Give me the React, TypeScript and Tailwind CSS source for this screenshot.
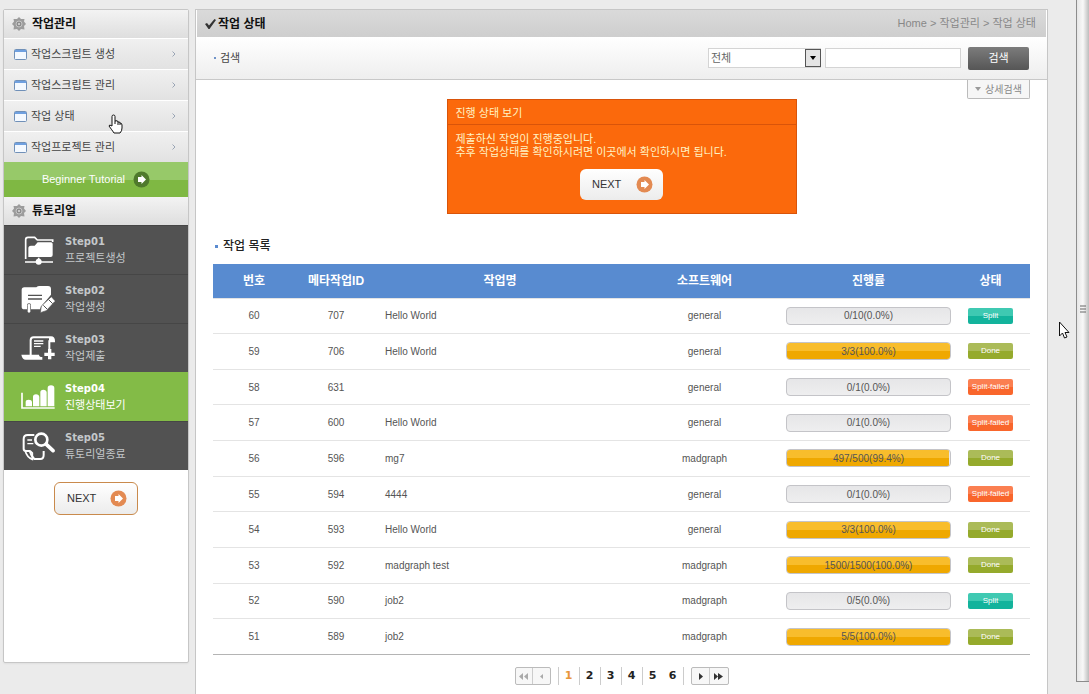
/**
 * Job Status Page
 * Sidebar menu with tutorial steps, search bar and job list
 */

import { useState } from 'react'
import type { ReactNode } from 'react'

type JobState = 'Split' | 'Done' | 'Split-failed'

interface Job {
  no: number
  metaId: number
  name: string
  software: string
  done: number
  total: number
  percent: string
  state: JobState
}

interface Step {
  id: string
  title: string
  icon: ReactNode
}

const MENU = ['작업스크립트 생성', '작업스크립트 관리', '작업 상태', '작업프로젝트 관리']

const JOBS: Job[] = [
  { no: 60, metaId: 707, name: 'Hello World', software: 'general', done: 0, total: 10, percent: '0.0', state: 'Split' },
  { no: 59, metaId: 706, name: 'Hello World', software: 'general', done: 3, total: 3, percent: '100.0', state: 'Done' },
  { no: 58, metaId: 631, name: '', software: 'general', done: 0, total: 1, percent: '0.0', state: 'Split-failed' },
  { no: 57, metaId: 600, name: 'Hello World', software: 'general', done: 0, total: 1, percent: '0.0', state: 'Split-failed' },
  { no: 56, metaId: 596, name: 'mg7', software: 'madgraph', done: 497, total: 500, percent: '99.4', state: 'Done' },
  { no: 55, metaId: 594, name: '4444', software: 'general', done: 0, total: 1, percent: '0.0', state: 'Split-failed' },
  { no: 54, metaId: 593, name: 'Hello World', software: 'general', done: 3, total: 3, percent: '100.0', state: 'Done' },
  { no: 53, metaId: 592, name: 'madgraph test', software: 'madgraph', done: 1500, total: 1500, percent: '100.0', state: 'Done' },
  { no: 52, metaId: 590, name: 'job2', software: 'madgraph', done: 0, total: 5, percent: '0.0', state: 'Split' },
  { no: 51, metaId: 589, name: 'job2', software: 'madgraph', done: 5, total: 5, percent: '100.0', state: 'Done' },
]

const STATE_STYLE: Record<JobState, string> = {
  Split: 'bg-linear-to-b from-[#3fc9b2] from-50% to-[#13b39c] to-50%',
  Done: 'bg-linear-to-b from-[#abbb58] from-50% to-[#95aa2c] to-50%',
  'Split-failed': 'bg-linear-to-b from-[#fb7f51] from-50% to-[#f9662c] to-50%',
}

const STEPS: Step[] = [
  {
    id: 'Step01',
    title: '프로젝트생성',
    icon: (
      <>
        <path d="M14 72V14q0-7 7-7h20l8 8h46v6" fill="none" stroke="#fff" strokeWidth="5" />
        <path d="M22 66V40q0-8 8-8h11l9-10h40q5 0 5 5v33q0 6-6 6z" fill="#fff" />
        <path d="M12 81h84M53 68v12" stroke="#fff" strokeWidth="5" />
        <circle cx="53" cy="80" r="9" fill="#fff" />
      </>
    ),
  },
  {
    id: 'Step02',
    title: '작업생성',
    icon: (
      <>
        <path d="M2 18q0-8 8-8h36q4-4 9-4h26q9 0 9 9v17L60 68l-3 8H30V64q0-6-6-6t-6 6v12H10q-8 0-8-8z" fill="#fff" />
        <path d="M21 34h42M21 45h42" stroke="#525252" strokeWidth="4" />
        <path d="M24 64v18" stroke="#fff" strokeWidth="8" strokeLinecap="round" />
        <path d="M58 86l3-20 30-28 12 13-27 29z" fill="#fff" stroke="#525252" strokeWidth="2" />
        <path d="M67 64l11 11M83 47l12 12" stroke="#525252" strokeWidth="3" />
      </>
    ),
  },
  {
    id: 'Step03',
    title: '작업제출',
    icon: (
      <>
        <path d="M29 66V22q0-9 9-9h52q9 0 9 12h-14V52" fill="none" stroke="#fff" strokeWidth="6" />
        <path d="M84 27V12q15 0 17 15z" fill="#fff" />
        <path d="M39 24h28M39 32h28M39 40h20" stroke="#fff" strokeWidth="4" />
        <path d="M1 65h53q0 7 10 7v8H14Q4 80 1 65z" fill="#fff" />
        <path d="M86 48v31M70 64h31" stroke="#fff" strokeWidth="10" />
      </>
    ),
  },
  {
    id: 'Step04',
    title: '진행상태보기',
    icon: (
      <>
        <path d="M3 32v46h98" fill="none" stroke="#fff" strokeWidth="5" />
        <path d="M14 73V60q0-7 9-7t10 7v13zM36 73V45q0-8 9-8t10 8v28zM58 73V31q0-8 9-8t10 8v42zM80 73V18q0-8 10-8t10 8v55z" fill="#fff" />
      </>
    ),
  },
  {
    id: 'Step05',
    title: '튜토리얼종료',
    icon: (
      <>
        <path d="M40 12H20Q8 12 8 24v30q0 6 8 6h10q4 14 14 24h18q10 0 10-12V60" fill="none" stroke="#fff" strokeWidth="6" />
        <path d="M12 58q6 22 22 27V66q-4-6-10-6" fill="none" stroke="#fff" strokeWidth="5" />
        <path d="M19 27h14M19 38h18" stroke="#fff" strokeWidth="4" />
        <circle cx="61" cy="26" r="18" fill="none" stroke="#fff" strokeWidth="8" />
        <path d="M76 40l20 19" stroke="#fff" strokeWidth="11" strokeLinecap="round" />
      </>
    ),
  },
]

function GearIcon() {
  return (
    <svg width="14" height="14" viewBox="0 0 14 14" aria-hidden="true">
      <path d="M7 0l2 2h3.500L12 4.500 14 7l-2 2 .5 3.500L9 12l-2 2-2-2-3.500.5L2 9 0 7l2-2.500L1.500 2H5z" fill="#9c9c9c" />
      <circle cx="7" cy="7" r="3" fill="#8d8d8d" stroke="#c6c6c6" />
      <circle cx="7" cy="7" r="1" fill="#dedede" />
    </svg>
  )
}

function WindowIcon() {
  return (
    <svg width="13" height="11" viewBox="0 0 13 11" aria-hidden="true">
      <rect x=".5" y=".5" width="12" height="10" rx="1" fill="#f4f9ff" stroke="#7090b8" />
      <path d="M1 2h11" stroke="#6fa0e0" strokeWidth="2" />
    </svg>
  )
}

function ArrowCircle({ color }: { color: string }) {
  return (
    <svg width="17" height="17" viewBox="0 0 17 17" aria-hidden="true">
      <circle cx="8.500" cy="8.500" r="8" fill={color} />
      <path d="M5 6h3.500V4l4.500 4.500L8.500 13v-2H5z" fill="#fff" />
    </svg>
  )
}

function NextButton({ className }: { className: string }) {
  return (
    <button
      className={`flex items-center justify-between rounded-md bg-linear-to-b from-white to-[#ececec] pr-2.5 pl-3 text-[11px] text-[#333] ${className}`}
    >
      NEXT
      <ArrowCircle color="#e38a52" />
    </button>
  )
}

function SideHeader({ title }: { title: string }) {
  return (
    <h2 className="flex h-7 items-center gap-1.5 bg-linear-to-b from-[#f3f3f3] to-[#dedede] pl-2 text-xs font-bold text-[#111]">
      <GearIcon />
      {title}
    </h2>
  )
}

function ProgressBar({ job }: { job: Job }) {
  return (
    <div className="relative h-[18px] overflow-hidden rounded-sm border border-[#c4c4c8] bg-linear-to-b from-[#e6e6e8] to-[#eeeeef]">
      <div
        className="h-full bg-linear-to-b from-[#f8bd2c] from-50% to-[#efa800] to-50%"
        style={{ width: `${job.percent}%` }}
      />
      <span className="absolute inset-0 flex items-center justify-center text-[#555]">
        {job.done}/{job.total}({job.percent}%)
      </span>
    </div>
  )
}

function PageArrow({ label, d, muted }: { label: string; d: string; muted?: boolean }) {
  return (
    <button aria-label={label} className={`flex flex-1 items-center justify-center ${muted ? 'text-[#aaa]' : 'text-[#333]'}`}>
      <svg width="9" height="7" viewBox="0 0 9 7" aria-hidden="true">
        <path d={d} fill="currentColor" />
      </svg>
    </button>
  )
}

export default function App() {
  const [activeStep, setActiveStep] = useState('Step04')
  const [page, setPage] = useState(1)
  const [keyword, setKeyword] = useState('')

  return (
    <div className="relative flex min-h-screen bg-[#ebebeb] pl-[3px] font-['Liberation_Sans','Noto_Sans_CJK_KR',sans-serif] text-[11px] text-[#444]">
      {/* Sidebar */}
      <aside className="mt-[9px] mb-[31px] w-[186px] shrink-0 rounded-xs border border-[#c6c6c6] bg-white shadow-xs">
        <SideHeader title="작업관리" />
        <nav>
          {MENU.map((item) => (
            <a
              key={item}
              href="#"
              className="flex h-[31px] items-center gap-1 border-t border-white bg-linear-to-b from-[#f0f0f0] to-[#e2e2e2] pr-3 pl-2.5"
            >
              <WindowIcon />
              <span className="flex-1">{item}</span>
              <svg width="4" height="6" viewBox="0 0 4 6" aria-hidden="true">
                <path d="M.5.5L3 3 .5 5.500" fill="none" stroke="#9aa5b5" />
              </svg>
            </a>
          ))}
        </nav>
        <button className="flex h-[35px] w-full items-center justify-center gap-2 bg-linear-to-b from-[#97c969] from-50% to-[#7fb843] to-50% text-white">
          Beginner Tutorial
          <ArrowCircle color="#4f7a2c" />
        </button>
        <SideHeader title="튜토리얼" />
        {STEPS.map((step) => (
          <button
            key={step.id}
            onClick={() => setActiveStep(step.id)}
            className={`flex h-[49px] w-full items-center gap-2.5 border-t pl-[17px] text-left ${
              step.id === activeStep
                ? 'border-[#83bb47] bg-[#83bb47] text-white'
                : 'border-[#464646] bg-[#525252] text-[#c4c8ca]'
            }`}
          >
            <svg width="34" height="30" viewBox="0 0 102 90" aria-hidden="true">
              {step.icon}
            </svg>
            <span className="leading-4">
              <b className="block font-['DejaVu_Sans',sans-serif] text-[10px]">{step.id}</b>
              {step.title}
            </span>
          </button>
        ))}
        <NextButton className="mx-auto mt-3 h-[33px] w-[84px] border border-[#c98a4c]" />
      </aside>

      {/* Main Content */}
      <main className="mt-[9px] ml-1.5 min-w-0 flex-1 border border-b-0 border-[#c6c6c6] bg-white">
        <header className="flex h-[27px] items-center justify-between border-x border-white bg-linear-to-b from-[#dadada] to-[#cecece] pr-2.5 pl-2">
          <h1 className="flex items-center gap-0.5 text-xs font-bold text-[#111]">
            <svg width="11" height="10" viewBox="0 0 11 10" aria-hidden="true">
              <path d="M0 5l2-1 2 2.500L9.500 0 11 1 4.500 10h-1z" fill="#333" />
            </svg>
            작업 상태
          </h1>
          <p className="text-[#888]">Home &gt; 작업관리 &gt; 작업 상태</p>
        </header>

        {/* Search */}
        <form
          onSubmit={(e) => e.preventDefault()}
          className="flex h-[43px] items-center border-b border-[#c8c8c8] bg-linear-to-b from-white to-[#eeeeee] px-[18px]"
        >
          <span className="mr-1 size-0.5 bg-[#6f93c8]" />
          <label htmlFor="keyword" className="flex-1">
            검색
          </label>
          <div className="relative mr-1 h-5 w-[113px]">
            <select aria-label="검색 구분" className="size-full appearance-none border border-[#d4d4d4] bg-white pl-0.5 text-[#666]">
              <option>전체</option>
            </select>
            <svg className="pointer-events-none absolute top-px right-0" width="16" height="18" viewBox="0 0 16 18" aria-hidden="true">
              <rect x=".5" y=".5" width="15" height="17" fill="#e4e4e4" stroke="#555" />
              <path d="M5 7h6l-3 4z" fill="#000" />
            </svg>
          </div>
          <input
            id="keyword"
            type="text"
            value={keyword}
            onChange={(e) => setKeyword(e.target.value)}
            className="mr-[7px] h-5 w-[136px] border border-[#d4d4d4] bg-white px-1"
          />
          <button className="h-[23px] w-[61px] rounded-xs bg-linear-to-b from-[#7c7c7c] to-[#565656] text-white">검색</button>
        </form>

        <div className="px-[17px]">
          <div className="flex h-[19px] justify-end">
            <button className="flex w-[63px] items-center justify-center gap-1 rounded-b-xs border border-t-0 border-[#bbb] bg-[#f6f6f6] text-[10px] text-[#888]">
              <svg width="6" height="4" viewBox="0 0 6 4" aria-hidden="true">
                <path d="M0 0h6L3 4z" fill="#999" />
              </svg>
              상세검색
            </button>
          </div>

          {/* Tutorial guide */}
          <section className="mx-auto h-[115px] w-[350px] border border-[#d9540a] bg-[#fb690c] text-[#fff3c4]">
            <h2 className="h-[25px] border-b border-[#d9540a] pl-2 leading-[26px]">진행 상태 보기</h2>
            <p className="mt-2 pl-2 leading-[13px]">
              제출하신 작업이 진행중입니다.
              <br />
              추후 작업상태를 확인하시려면 이곳에서 확인하시면 됩니다.
            </p>
            <NextButton className="mx-auto mt-2.5 h-[31px] w-[83px]" />
          </section>

          {/* Job list */}
          <h2 className="mt-6 flex h-4 items-center gap-[5px] pl-0.5 text-xs font-medium text-[#222]">
            <span className="size-[3px] bg-[#5b8bd0]" />
            작업 목록
          </h2>
          <table className="mt-2.5 h-[391px] w-full table-fixed border-b border-[#b4b4b4] text-center text-[10px] text-[#555]">
            <thead>
              <tr className="h-[34px] bg-[#588bd0] text-xs text-white">
                <th className="w-[82px]">번호</th>
                <th className="w-[82px]">메타작업ID</th>
                <th>작업명</th>
                <th className="w-[163px]">소프트웨어</th>
                <th className="w-[165px]">진행률</th>
                <th className="w-[79px]">상태</th>
              </tr>
            </thead>
            <tbody>
              {JOBS.map((job) => (
                <tr key={job.no} className="border-t border-[#e4e4e4]">
                  <td>{job.no}</td>
                  <td>{job.metaId}</td>
                  <td className="pl-2 text-left">{job.name}</td>
                  <td>{job.software}</td>
                  <td>
                    <ProgressBar job={job} />
                  </td>
                  <td>
                    <span className={`mx-auto block h-4 w-[45px] rounded-xs text-[8px] leading-4 text-white ${STATE_STYLE[job.state]}`}>
                      {job.state}
                    </span>
                  </td>
                </tr>
              ))}
            </tbody>
          </table>

          {/* Paging */}
          <nav aria-label="페이지" className="mt-3 mb-1 flex h-[18px] items-stretch justify-center">
            <div className="mr-[7px] flex w-[36px] divide-x divide-[#ccc] rounded-xs border border-[#bbb] bg-[#f7f7f7]">
              <PageArrow label="처음" muted d="M4 0v7L0 3.500zM9 0v7L5 3.500z" />
              <PageArrow label="이전" muted d="M6 1v5L3 3.500z" />
            </div>
            <ul className="flex border-x border-[#ccc] font-['DejaVu_Sans',sans-serif] font-bold">
              {[1, 2, 3, 4, 5, 6].map((n) => (
                <li key={n} className={n > 1 && n < 6 ? 'border-l border-[#ccc]' : ''}>
                  <button
                    onClick={() => setPage(n)}
                    className={`h-full w-5 ${n === page ? 'text-[#e8963c]' : 'text-[#222]'}`}
                  >
                    {n}
                  </button>
                </li>
              ))}
            </ul>
            <div className="ml-[7px] flex w-[38px] divide-x divide-[#ccc] rounded-xs border border-[#bbb] bg-[#f7f7f7]">
              <PageArrow label="다음" d="M3 0v7l4-3.500z" />
              <PageArrow label="마지막" d="M0 0v7l4-3.500zM4 0v7l5-3.500z" />
            </div>
          </nav>
        </div>
      </main>

      {/* Splitter on the right edge */}
      <div className="mb-3 ml-7 flex w-[13px] shrink-0 flex-col items-center border-b border-l border-[#8c8c8c] bg-linear-to-r from-[#e6e6e6] via-[#f8f8f8] to-[#bdbdbd] pt-[305px]">
        <svg width="6" height="8" viewBox="0 0 6 8" aria-hidden="true">
          <path d="M0 1h6M0 4h6M0 7h6" stroke="#666" />
        </svg>
      </div>

      {/* Mouse pointers */}
      <svg className="pointer-events-none absolute top-[114px] left-[108px]" width="15" height="20" viewBox="0 0 15 20" aria-hidden="true">
        <path
          d="M4 12V2.500Q4 1 5.500 1T7 2.500V7q3-1 3 1 2-.5 2 1 2 0 2 2v3q0 3-2 5H6q-2-3-5-7 0-2 3 0zM7 7v3M10 8v3M12 9v2"
          fill="#fff"
          stroke="#111"
        />
      </svg>
      <svg className="pointer-events-none absolute top-[321px] right-[19px]" width="11" height="18" viewBox="0 0 11 18" aria-hidden="true">
        <path d="M.5 1v14l3-3 2 5 2.500-1-2-4.500H10z" fill="#fff" stroke="#111" />
      </svg>
    </div>
  )
}
